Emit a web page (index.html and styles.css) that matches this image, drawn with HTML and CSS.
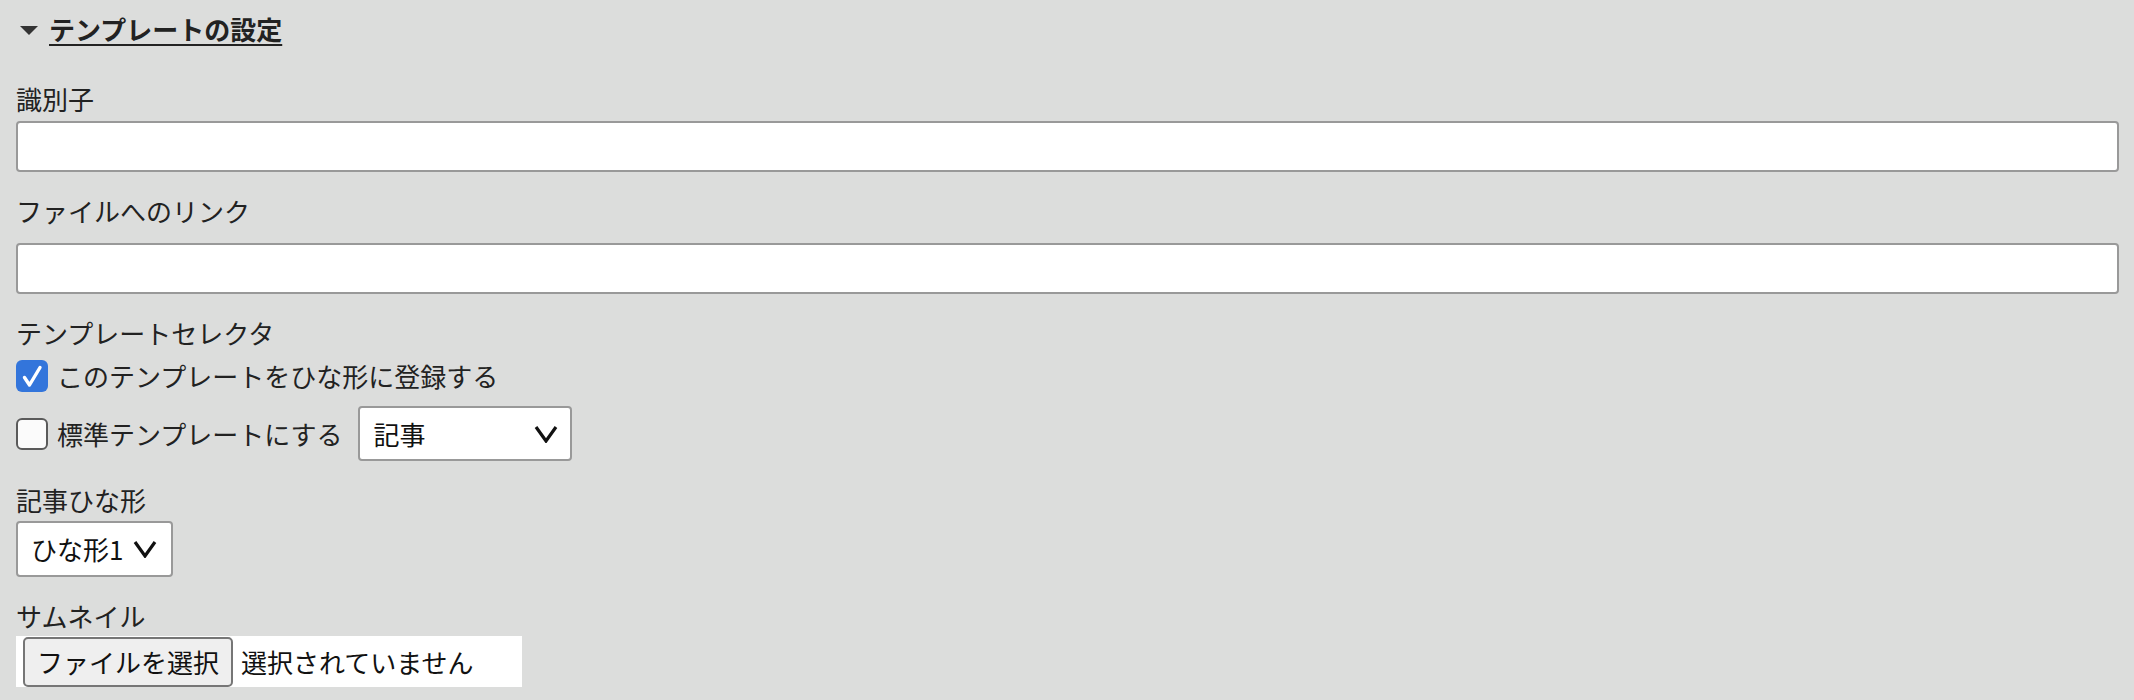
FILE: index.html
```html
<!DOCTYPE html>
<html lang="ja">
<head>
<meta charset="utf-8">
<title>テンプレートの設定</title>
<link rel="stylesheet" href="styles.css">
</head>
<body>
<details class="panel" open>
  <summary class="panel-title">
    <span class="marker"></span>
    <span class="title-text">テンプレートの設定</span>
  </summary>

  <div class="field field-first">
    <label class="label" for="ident">識別子</label>
    <input class="text-input" id="ident" type="text">
  </div>

  <div class="field">
    <label class="label" for="link">ファイルへのリンク</label>
    <input class="text-input text-input-spaced" id="link" type="text">
  </div>

  <div class="field">
    <div class="label">テンプレートセレクタ</div>
    <label class="check check-first">
      <span class="box box-on">
        <svg viewBox="0 0 32 32" width="32" height="32"><path d="M8.5 17.5 L13.5 25 L24 7.5" fill="none" stroke="#fff" stroke-width="3.4" stroke-linecap="round" stroke-linejoin="round"/></svg>
      </span>
      <span>このテンプレートをひな形に登録する</span>
    </label>
    <div class="check-row">
      <label class="check">
        <span class="box"></span>
        <span>標準テンプレートにする</span>
      </label>
      <div class="select select-wide">
        <span class="select-text">記事</span>
        <svg class="chev" viewBox="0 0 24 18" width="24" height="18"><path d="M2 2 L12 16 L22 2" fill="none" stroke="#111" stroke-width="3.2" stroke-linejoin="miter"/></svg>
      </div>
    </div>
  </div>

  <div class="field">
    <div class="label">記事ひな形</div>
    <div class="select select-narrow">
      <span class="select-text">ひな形1</span>
      <svg class="chev" viewBox="0 0 24 18" width="24" height="18"><path d="M2 2 L12 16 L22 2" fill="none" stroke="#111" stroke-width="3.2" stroke-linejoin="miter"/></svg>
    </div>
  </div>

  <div class="field">
    <div class="label">サムネイル</div>
    <label class="file">
      <span class="file-btn">ファイルを選択</span>
      <span class="file-name">選択されていません</span>
    </label>
  </div>
</details>
</body>
</html>
```

FILE: styles.css
```css
html, body {
  margin: 0;
  padding: 0;
  background: #dcdddc;
}

body {
  font-family: "Noto Sans CJK JP", "Noto Sans", sans-serif;
  font-size: 26px;
  line-height: 30px;
  color: #222;
}

.panel {
  padding: 14px 15px 0 16px;
}

.panel-title {
  list-style: none;
  display: flex;
  align-items: center;
  gap: 11px;
  cursor: pointer;
  font-weight: 700;
}

.panel-title::-webkit-details-marker {
  display: none;
}

.marker {
  width: 0;
  height: 0;
  margin-left: 4px;
  margin-top: 2px;
  border-left: 9px solid transparent;
  border-right: 9px solid transparent;
  border-top: 9px solid #333;
}

.title-text {
  text-decoration: underline;
  text-decoration-thickness: 2px;
  text-underline-offset: 4px;
}

.field {
  display: flex;
  flex-direction: column;
  align-items: flex-start;
  margin-top: 24px;
}

.field-first {
  margin-top: 40px;
}

.label {
  display: block;
  height: 30px;
}

.text-input {
  box-sizing: border-box;
  width: 100%;
  height: 51px;
  margin: 7px 0 0;
  border: 2px solid #999;
  border-radius: 4px;
  background: #fff;
  font: inherit;
  padding: 0 12px;
}

.text-input-spaced {
  margin-top: 17px;
}

.check {
  display: flex;
  align-items: center;
  gap: 9px;
}

.check-first {
  margin-top: 12px;
}

.box {
  box-sizing: border-box;
  width: 32px;
  height: 32px;
  border-radius: 6px;
  border: 2px solid #5a5a5a;
  background: #fbfbfb;
  display: flex;
  align-items: center;
  justify-content: center;
  flex: none;
}

.box-on {
  border: none;
  background: #3375db;
}

.check-row {
  display: flex;
  align-items: center;
  gap: 16px;
  margin-top: 14px;
}

.select {
  box-sizing: border-box;
  height: 55px;
  display: flex;
  align-items: center;
  justify-content: space-between;
  background: #fff;
  border: 2px solid #999;
  border-radius: 4px;
  color: #111;
}

.select-wide {
  width: 214px;
  padding: 0 12px 0 13px;
}

.select-narrow {
  width: 157px;
  height: 56px;
  margin-top: 6px;
  padding: 0 14px 0 13px;
}

.chev {
  display: block;
  flex: none;
}

.file {
  display: flex;
  align-items: center;
  gap: 8px;
  width: 506px;
  height: 51px;
  margin-top: 5px;
  background: #fff;
  box-sizing: border-box;
  padding-left: 7px;
}

.file-btn {
  box-sizing: border-box;
  height: 50px;
  margin-top: 1px;
  padding: 0 12px;
  display: flex;
  align-items: center;
  background: #efefef;
  border: 2px solid #767676;
  border-radius: 5px;
  color: #111;
}

.file-name {
  color: #111;
}
```
